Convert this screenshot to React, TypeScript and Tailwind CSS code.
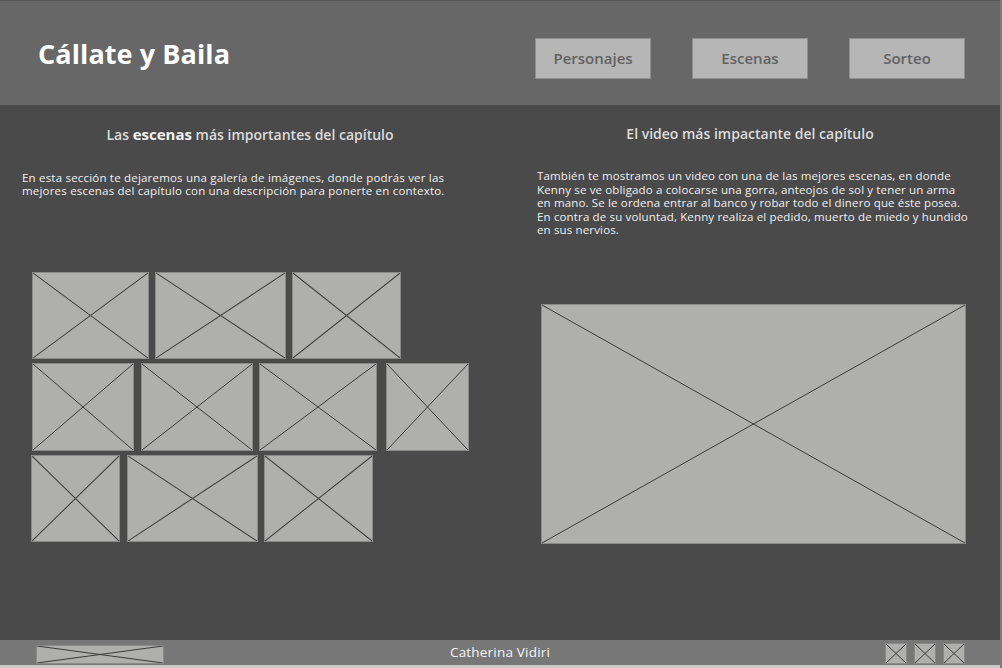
import React from "react";

const FONT = { fontFamily: '"Open Sans", "Noto Sans", Arial, sans-serif' };

const GALLERY = [
  { pl: "pl-[32px]", items: [{ w: "w-[117px]", h: "h-[87px]" }, { w: "w-[131px]", h: "h-[87px]" }, { w: "w-[109px]", h: "h-[87px]" }], gaps: ["ml-0", "ml-[6px]", "ml-[6px]"] },
  { pl: "pl-[32px]", items: [{ w: "w-[102px]", h: "h-[88px]" }, { w: "w-[112px]", h: "h-[88px]" }, { w: "w-[118px]", h: "h-[88px]" }, { w: "w-[83px]", h: "h-[88px]" }], gaps: ["ml-0", "ml-[7px]", "ml-[6px]", "ml-[9px]"] },
  { pl: "pl-[31px]", items: [{ w: "w-[89px]", h: "h-[87px]" }, { w: "w-[131px]", h: "h-[87px]" }, { w: "w-[109px]", h: "h-[87px]" }], gaps: ["ml-0", "ml-[7px]", "ml-[6px]"] },
];

function Placeholder({ className = "" }: { className?: string }) {
  return (
    <div className={`relative bg-[#afb0ae] border border-[#8a8a8a] ${className}`}>
      <svg className="absolute inset-0 w-full h-full" viewBox="0 0 100 100" preserveAspectRatio="none">
        <line x1="0" y1="0" x2="100" y2="100" stroke="#3a3a3a" strokeWidth="1" vectorEffect="non-scaling-stroke" />
        <line x1="100" y1="0" x2="0" y2="100" stroke="#3a3a3a" strokeWidth="1" vectorEffect="non-scaling-stroke" />
      </svg>
    </div>
  );
}

export default function App() {
  return (
    <div className="w-[1002px] h-[668px] flex flex-col bg-[#4a4a4a] overflow-hidden border-r-2 border-[#7c7c7c]" style={FONT}>
      {/* header */}
      <header className="h-[105px] shrink-0 bg-[#676767] border-t border-[#555] flex items-start">
        <h1 className="ml-[38px] mt-[37px] text-[27px] leading-[32px] font-bold text-white tracking-[0.1px]">Cállate y Baila</h1>
        <nav className="ml-auto mt-[37px] mr-[35px] flex gap-[41px]">
          {["Personajes", "Escenas", "Sorteo"].map((t) => (
            <button
              key={t}
              className="w-[116px] h-[41px] bg-[#b6b6b6] border border-[#8f8f8f] text-[#626262] text-[15px] font-semibold"
            >
              {t}
            </button>
          ))}
        </nav>
      </header>

      {/* content */}
      <main className="flex-1 flex">
        <section className="w-[500px] flex flex-col">
          <h2 className="mt-[18px] text-center text-[14px] font-semibold text-[#dcdcdc]">
            Las <span className="text-[15px] font-bold text-[#f2f2f2]">escenas</span> más importantes del capítulo
          </h2>
          <p className="mt-[25px] pl-[22px] pr-[44px] text-[11.5px] leading-[13px] tracking-[0.2px] text-[#f0f0f0]">
            En esta sección te dejaremos una galería de imágenes, donde podrás ver las mejores escenas del capítulo con una descripción para ponerte en contexto.
          </p>
          <div className="mt-[75px] flex flex-col gap-[4px]">
            {GALLERY.map((row, ri) => (
              <div key={ri} className={`flex ${row.pl}`}>
                {row.items.map((it, i) => (
                  <Placeholder key={i} className={`${it.w} ${it.h} ${row.gaps[i]}`} />
                ))}
              </div>
            ))}
          </div>
        </section>

        <section className="flex-1 flex flex-col">
          <h2 className="mt-[18px] text-center text-[14px] font-semibold text-[#dcdcdc]">El video más impactante del capítulo</h2>
          <p className="mt-[25px] pl-[37px] pr-[10px] text-[11.5px] leading-[13.5px] tracking-[0.15px] text-[#f0f0f0]">
            También te mostramos un video con una de las mejores escenas, en donde
            <br />
            Kenny se ve obligado a colocarse una gorra, anteojos de sol y tener un arma
            <br />
            en mano. Se le ordena entrar al banco y robar todo el dinero que éste posea.
            <br />
            En contra de su voluntad, Kenny realiza el pedido, muerto de miedo y hundido
            <br />
            en sus nervios.
          </p>
          <Placeholder className="mt-[67px] ml-[41px] w-[425px] h-[240px]" />
        </section>
      </main>

      {/* footer */}
      <footer className="h-[25px] shrink-0 bg-[#777777] flex items-center">
        <div className="flex-1">
          <Placeholder className="ml-[36px] w-[128px] h-[19px] mt-[3px]" />
        </div>
        <span className="text-[13.5px] text-[#f5f5f5] tracking-[0.2px]">Catherina Vidiri</span>
        <div className="flex-1 flex justify-end">
          <div className="flex gap-[7px] mr-[35px] mt-[2px]">
            <Placeholder className="w-[22px] h-[21px]" />
            <Placeholder className="w-[22px] h-[21px]" />
            <Placeholder className="w-[22px] h-[21px]" />
          </div>
        </div>
      </footer>
      <div className="h-[3px] shrink-0 bg-[#c9c9c9]" />
    </div>
  );
}
